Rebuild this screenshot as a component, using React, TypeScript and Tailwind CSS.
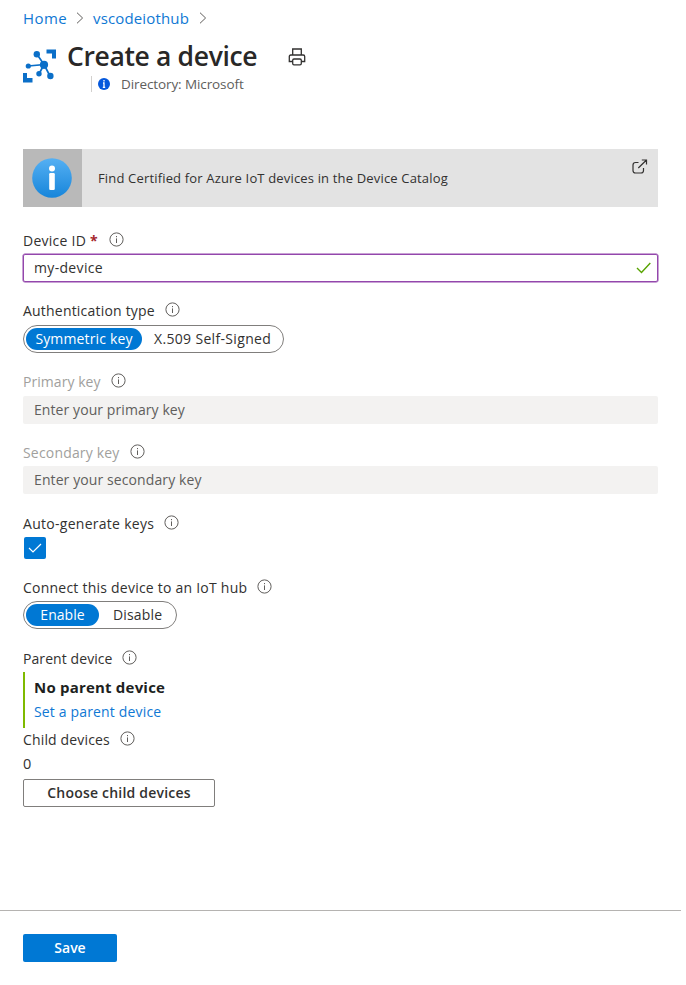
import React from "react";

function InfoIcon() {
  return (
    <svg className="-mt-[2px] h-[15px] w-[15px] shrink-0" viewBox="0 0 15 15" fill="none" stroke="#605e5c">
      <circle cx="7.5" cy="7.5" r="6.6" strokeWidth="1" />
      <path d="M7.5 6.4V11M7.5 4v1.2" strokeWidth="1" />
    </svg>
  );
}

function Label({ text, width, tracking = "tracking-[0.15px]", muted = false, required = false }: { text: string; width: string; tracking?: string; muted?: boolean; required?: boolean }) {
  return (
    <div className={`flex h-[28px] items-center pt-[1px] whitespace-nowrap ${muted ? "text-[#a19f9d]" : "text-[#323130]"}`}>
      <div className={`${width} flex shrink-0`}>
        <span className={tracking}>{text}</span>
        {required && <span className="ml-[4px] font-bold text-[#a4262c]">*</span>}
      </div>
      <InfoIcon />
    </div>
  );
}

function Crumb() {
  return (
    <svg className="h-[12px] w-[8px] shrink-0" viewBox="0 0 8 12" fill="none" stroke="#605e5c">
      <path d="M1 .7 6.6 6 1 11.3" />
    </svg>
  );
}

export default function App() {
  return (
    <main className="h-[985px] w-[686px] overflow-hidden bg-white font-['Open_Sans','Noto_Sans',sans-serif] text-[14px] leading-[20px] text-[#323130]">
      <div className="flex flex-col pl-[23px]">
        <nav className="mt-[8px] flex h-[20px] items-center whitespace-nowrap text-[15px] text-[#0f78d4]">
          <span className="w-[53px] tracking-[0.4px]">Home</span>
          <Crumb />
          <span className="ml-[9px] w-[106px] tracking-[0.15px]">vscodeiothub</span>
          <Crumb />
        </nav>
        <header className="mt-[10px] flex h-[60px]">
          <svg className="mt-[11px] h-[34px] w-[34px] shrink-0" viewBox="0 0 34 34" fill="#0b6fc8">
            <path d="M23.5 .5H33v9h-4V4.500h-5.500zM0 24h4v5h5.500v4.500H0z" />
            <path d="M13.800 5 21 15.500 5.300 17M21 15.500 16 25M21 15.500l6 11.500" fill="none" stroke="#0b6fc8" strokeWidth="1.7" />
            <circle cx="13.800" cy="5.300" r="3.200" />
            <circle cx="5.300" cy="17" r="2.600" />
            <circle cx="21" cy="15.800" r="4.100" />
            <circle cx="16" cy="24.800" r="2.700" />
            <circle cx="27.400" cy="27" r="3.200" />
          </svg>
          <div className="ml-[10px] flex flex-col">
            <div className="flex h-[36px] items-center">
              <h1 className="w-[221px] whitespace-nowrap text-[26.500px] font-semibold leading-[36px] tracking-[-0.35px] text-[#292827]">Create a device</h1>
              <svg className="mt-[1px] h-[18px] w-[18px]" viewBox="0 0 18 18" fill="none" stroke="#323130" strokeWidth="1.300">
                <path d="M4.700 7V1h8.600v6M4.700 13.500H1.300V8.500Q1.300 7 2.800 7h12.400q1.500 0 1.500 1.500v5h-3.400M6 11h6q1.300 0 1.300 1.300v3.200q0 1.300-1.300 1.300H6q-1.300 0-1.300-1.300v-3.200Q4.700 11 6 11z" />
              </svg>
            </div>
            <div className="ml-[24px] mt-[2px] flex h-[16px] items-center border-l border-[#d2d0ce] text-[#605e5c]">
              <svg className="ml-[6px] h-[12px] w-[12px]" viewBox="0 0 12 12">
                <circle cx="6" cy="6" r="6" fill="#0558dc" />
                <path d="M6 2v1.600M5 5h1v4.300M4.800 9.300h2.400" stroke="white" strokeWidth="1.300" fill="none" />
              </svg>
              <span className="ml-[11px] whitespace-nowrap text-[13.500px] tracking-[-0.1px]">Directory: Microsoft</span>
            </div>
          </div>
        </header>

        <section className="mt-[51px] flex h-[58px] w-[635px] bg-[#e3e3e3]">
          <div className="flex w-[59px] items-center justify-center bg-[#b9b9b9] pr-[2px]">
            <svg className="h-[40px] w-[40px]" viewBox="0 0 40 40">
              <defs>
                <linearGradient id="blue" x1="0" y1="0" x2="0" y2="1">
                  <stop stopColor="#55b0f3" />
                  <stop offset="1" stopColor="#1785da" />
                </linearGradient>
              </defs>
              <circle cx="20" cy="20" r="19.800" fill="url(#blue)" />
              <circle cx="20" cy="10.500" r="3" fill="white" />
              <rect x="17.200" y="15" width="5.600" height="17" rx="1.300" fill="white" />
            </svg>
          </div>
          <span className="ml-[16px] flex w-[541px] items-center whitespace-nowrap text-[13px] tracking-[0.165px]">Find Certified for Azure IoT devices in the Device Catalog</span>
          <svg className="-ml-[7px] mt-[10px] h-[15px] w-[16px] shrink-0" viewBox="0 0 16 15" fill="none" stroke="#323130" strokeWidth="1.200">
            <path d="M6.500 3.500h-3Q1 3.500 1 6v5.500Q1 14 3.500 14H9q2.500 0 2.500-2.500V9M6.300 9 14.500 1M9.800 1h4.700v4.600" />
          </svg>
        </section>

        <div className="mt-[19px]"><Label text="Device ID" width="w-[86px]" tracking="tracking-[0.25px]" required /></div>
        <div className="flex h-[28px] w-[635px] items-center justify-between rounded-[2px] border-[1.500px] border-[#9347ac] pl-[10px] pr-[6px] shadow-[0_0_0_0.5px_#9347ac]">
          <span className="tracking-[0.33px]">my-device</span>
          <svg className="h-[12px] w-[15px]" viewBox="0 0 15 12" fill="none" stroke="#57a300" strokeWidth="1.400"><path d="m1 6 4.500 4.500L14.300 1" /></svg>
        </div>

        <div className="mt-[14px]"><Label text="Authentication type" width="w-[142px]" tracking="tracking-[0.2px]" /></div>
        <div className="mt-[1px] flex h-[28px] w-[261px] items-center rounded-full border border-[#807e7c] p-[2px] whitespace-nowrap">
          <span className="flex h-[22px] w-[116px] items-center justify-center rounded-full bg-[#0078d4] tracking-[0.15px] text-white">Symmetric key</span>
          <span className="ml-[12px] tracking-[0.33px]">X.509 Self-Signed</span>
        </div>

        <div className="mt-[14px]"><Label text="Primary key" width="w-[88px]" tracking="tracking-[0.05px]" muted /></div>
        <div className="mt-[1px] flex h-[28px] w-[635px] items-center rounded-[2px] bg-[#f3f2f1] pl-[11px] text-[#605e5c]"><span className="tracking-[0.08px]">Enter your primary key</span></div>

        <div className="mt-[14px]"><Label text="Secondary key" width="w-[107px]" tracking="tracking-[0.18px]" muted /></div>
        <div className="flex h-[28px] w-[635px] items-center rounded-[2px] bg-[#f3f2f1] pl-[11px] text-[#605e5c]"><span className="tracking-[0.1px]">Enter your secondary key</span></div>

        <div className="mt-[15px]"><Label text="Auto-generate keys" width="w-[141px]" tracking="tracking-[0.28px]" /></div>
        <div className="ml-[1px] flex h-[22px] w-[22px] items-center justify-center rounded-[2px] bg-[#0078d4]">
          <svg className="h-[10px] w-[14px]" viewBox="0 0 14 10" fill="none" stroke="white" strokeWidth="1.200"><path d="m1 5 4 4 8-8" /></svg>
        </div>

        <div className="mt-[14px]"><Label text="Connect this device to an IoT hub" width="w-[234px]" tracking="tracking-[0.23px]" /></div>
        <div className="flex h-[28px] w-[154px] items-center rounded-full border border-[#807e7c] p-[2px]">
          <span className="flex h-[22px] w-[73px] items-center justify-center rounded-full bg-[#0078d4] tracking-[0.05px] text-white">Enable</span>
          <span className="ml-[14px] tracking-[0.15px]">Disable</span>
        </div>

        <div className="mt-[15px]"><Label text="Parent device" width="w-[99px]" tracking="tracking-[0.08px]" /></div>
        <div className="flex h-[56px] flex-col border-l-2 border-[#7fba00] pl-[9px]">
          <span className="mt-[5px] whitespace-nowrap text-[15px] font-bold tracking-[0.2px] text-[#201f1e]">No parent device</span>
          <span className="mt-[5px] whitespace-nowrap tracking-[0.16px] text-[#0f78d4]">Set a parent device</span>
        </div>

        <div className="-mt-[3px]"><Label text="Child devices" width="w-[97px]" /></div>
        <span className="mt-[1px] h-[25px] text-[14.500px]">0</span>
        <button className="flex h-[28px] w-[192px] items-center justify-center rounded-[2px] border border-[#807e7c] font-semibold whitespace-nowrap"><span className="tracking-[0.2px]">Choose child devices</span></button>
      </div>
      <footer className="mt-[103px] w-[681px] border-t border-[#b5b3b1] pl-[23px] pt-[23px]">
        <button className="flex h-[28px] w-[94px] items-center justify-center rounded-[2px] bg-[#0078d4] font-semibold text-white"><span>Save</span></button>
      </footer>
    </main>
  );
}
